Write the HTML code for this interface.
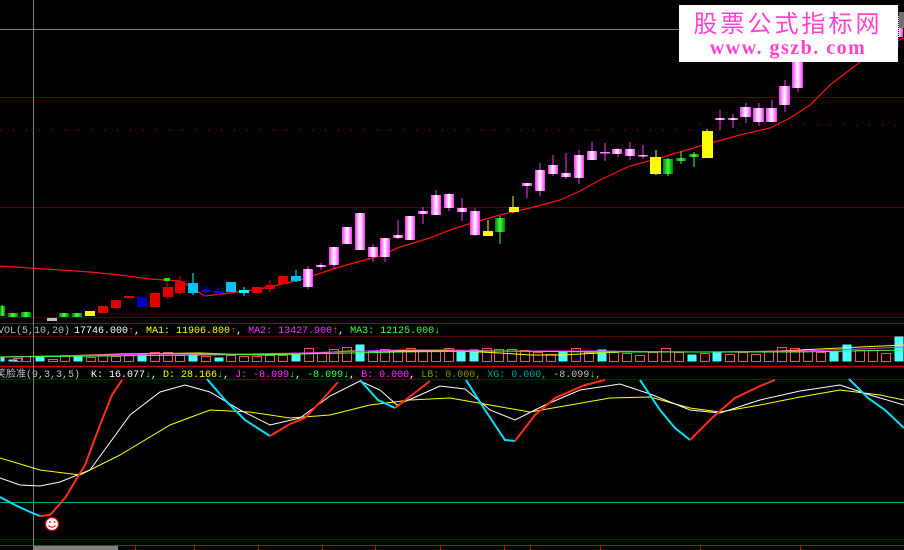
<!DOCTYPE html>
<html><head><meta charset="utf-8"><style>
html,body{margin:0;padding:0;background:#000;width:904px;height:550px;overflow:hidden}
svg{display:block}
.t{font-family:"Liberation Mono","Noto Sans CJK SC",monospace;font-size:10px}
</style></head><body>
<svg width="904" height="550" viewBox="0 0 904 550" xmlns="http://www.w3.org/2000/svg">
<defs>
<linearGradient id="pk" x1="0" x2="1"><stop offset="0" stop-color="#ff30ff"/><stop offset=".5" stop-color="#fff"/><stop offset="1" stop-color="#ff30ff"/></linearGradient>
<linearGradient id="gr" x1="0" x2="1"><stop offset="0" stop-color="#008000"/><stop offset=".5" stop-color="#40ff40"/><stop offset="1" stop-color="#008000"/></linearGradient>
</defs>
<g stroke="#5a0000" stroke-width="1">
<line x1="0" y1="97.5" x2="904" y2="97.5"/>
<line x1="0" y1="207.5" x2="904" y2="207.5"/>
<line x1="0" y1="317.5" x2="904" y2="317.5"/>
<line x1="0" y1="336.5" x2="904" y2="336.5"/>
<line x1="0" y1="379.5" x2="904" y2="379.5"/>
<line x1="0" y1="539.5" x2="904" y2="539.5"/>
</g>
<line x1="0" y1="323.5" x2="904" y2="323.5" stroke="#a00000"/>
<line x1="0" y1="366.5" x2="904" y2="366.5" stroke="#d00000" stroke-width="1.5"/>
<line x1="0" y1="545.5" x2="904" y2="545.5" stroke="#d00000"/>
<line x1="0" y1="29.5" x2="680" y2="29.5" stroke="#808080"/>
<line x1="33.5" y1="0" x2="33.5" y2="550" stroke="#808080"/>
<line x1="0" y1="130" x2="700" y2="130" stroke="#d00000" stroke-dasharray="1 12"/>
<line x1="700" y1="125" x2="904" y2="125" stroke="#d00000" stroke-dasharray="1 12"/>
<polyline fill="none" stroke="#ff1010" stroke-width="1.2" points="0,266 30,268 60,270 90,272 120,275 150,279 180,281 205,296 230,293 260,289 300,280 330,270 350,264 380,256 400,247 430,238 450,230 475,222 500,215 530,208 560,200 580,191 600,180 630,166 660,158 700,146 740,135 770,128 790,118 810,105 830,85 860,62 880,48 904,38"/>
<g id="c">
<g stroke-width="1">
<line x1="2" y1="305" x2="2" y2="316" stroke="#40ff40"/>
<line x1="167" y1="280" x2="167" y2="299" stroke="#ff0000"/>
<line x1="180" y1="276" x2="180" y2="295" stroke="#ff0000"/>
<line x1="193" y1="273" x2="193" y2="295" stroke="#00ffff"/>
<line x1="206" y1="285" x2="206" y2="296" stroke="#0000ff"/>
<line x1="218" y1="287" x2="218" y2="296" stroke="#0000ff"/>
<line x1="244" y1="287" x2="244" y2="296" stroke="#00ffff"/>
<line x1="270" y1="280" x2="270" y2="292" stroke="#ff0000"/>
<line x1="296" y1="270" x2="296" y2="282" stroke="#00ffff"/>
<line x1="308" y1="266" x2="308" y2="289" stroke="#ff30ff"/>
<line x1="321" y1="263" x2="321" y2="270" stroke="#ff30ff"/>
<line x1="334" y1="265" x2="334" y2="269" stroke="#ff30ff"/>
<line x1="373" y1="244" x2="373" y2="262" stroke="#ff30ff"/>
<line x1="385" y1="247" x2="385" y2="262" stroke="#ff30ff"/>
<line x1="398" y1="220" x2="398" y2="239" stroke="#ff30ff"/>
<line x1="423" y1="207" x2="423" y2="224" stroke="#ff30ff"/>
<line x1="436" y1="190" x2="436" y2="215" stroke="#ff30ff"/>
<line x1="449" y1="193" x2="449" y2="211" stroke="#ff30ff"/>
<line x1="462" y1="198" x2="462" y2="221" stroke="#ff30ff"/>
<line x1="475" y1="208" x2="475" y2="236" stroke="#ff30ff"/>
<line x1="488" y1="220" x2="488" y2="236" stroke="#ffff00"/>
<line x1="500" y1="216" x2="500" y2="244" stroke="#40ff40"/>
<line x1="513" y1="196" x2="513" y2="213" stroke="#ffff00"/>
<line x1="527" y1="183" x2="527" y2="198" stroke="#ff30ff"/>
<line x1="540" y1="163" x2="540" y2="196" stroke="#ff30ff"/>
<line x1="553" y1="155" x2="553" y2="176" stroke="#ff30ff"/>
<line x1="566" y1="153" x2="566" y2="179" stroke="#ff30ff"/>
<line x1="579" y1="150" x2="579" y2="184" stroke="#ff30ff"/>
<line x1="592" y1="142" x2="592" y2="160" stroke="#ff30ff"/>
<line x1="605" y1="143" x2="605" y2="161" stroke="#ff30ff"/>
<line x1="618" y1="148" x2="618" y2="157" stroke="#ff30ff"/>
<line x1="630" y1="142" x2="630" y2="160" stroke="#ff30ff"/>
<line x1="643" y1="145" x2="643" y2="159" stroke="#ff30ff"/>
<line x1="656" y1="150" x2="656" y2="175" stroke="#ffff00"/>
<line x1="668" y1="158" x2="668" y2="176" stroke="#40ff40"/>
<line x1="681" y1="151" x2="681" y2="164" stroke="#40ff40"/>
<line x1="694" y1="152" x2="694" y2="167" stroke="#40ff40"/>
<line x1="707" y1="129" x2="707" y2="158" stroke="#ffff00"/>
<line x1="720" y1="110" x2="720" y2="130" stroke="#ff30ff"/>
<line x1="733" y1="114" x2="733" y2="128" stroke="#ff30ff"/>
<line x1="746" y1="103" x2="746" y2="123" stroke="#ff30ff"/>
<line x1="759" y1="103" x2="759" y2="126" stroke="#ff30ff"/>
<line x1="772" y1="100" x2="772" y2="122" stroke="#ff30ff"/>
<line x1="785" y1="80" x2="785" y2="112" stroke="#ff30ff"/>
<line x1="798" y1="58" x2="798" y2="92" stroke="#ff30ff"/>
<line x1="898" y1="10" x2="898" y2="48" stroke="#ff30ff"/>
</g>
<rect x="0" y="306" width="5" height="10" fill="url(#gr)"/>
<rect x="8" y="313" width="10" height="4" fill="url(#gr)"/>
<rect x="21" y="312" width="10" height="5" fill="url(#gr)"/>
<rect x="47" y="318" width="10" height="3" fill="#c0c0c0"/>
<rect x="59" y="313" width="10" height="4" fill="url(#gr)"/>
<rect x="72" y="313" width="10" height="4" fill="url(#gr)"/>
<rect x="85" y="311" width="10" height="5" fill="#ffff00"/>
<rect x="98" y="306" width="10" height="7" fill="#e00000"/>
<rect x="111" y="300" width="10" height="8" fill="#e00000"/>
<rect x="124" y="296" width="10" height="2" fill="#e00000"/>
<rect x="137" y="297" width="10" height="10" fill="#0000c0"/>
<rect x="150" y="293" width="10" height="14" fill="#e00000"/>
<rect x="163" y="287" width="10" height="10" fill="#e00000"/>
<rect x="164" y="278" width="6" height="3" fill="#00ff00"/>
<rect x="175" y="281" width="10" height="12" fill="#e00000"/>
<rect x="188" y="283" width="10" height="10" fill="#00c0ff"/>
<rect x="201" y="290" width="10" height="2" fill="#0000ff"/>
<rect x="214" y="291" width="10" height="2" fill="#0000ff"/>
<rect x="226" y="282" width="10" height="10" fill="#00c0ff"/>
<rect x="239" y="290" width="10" height="3" fill="#00ffff"/>
<rect x="252" y="287" width="10" height="6" fill="#e00000"/>
<rect x="265" y="285" width="10" height="4" fill="#e00000"/>
<rect x="278" y="276" width="10" height="8" fill="#e00000"/>
<rect x="291" y="276" width="10" height="5" fill="#00c0ff"/>
<rect x="303" y="269" width="10" height="18" fill="url(#pk)"/>
<rect x="316" y="265" width="10" height="2" fill="url(#pk)"/>
<rect x="329" y="247" width="10" height="18" fill="url(#pk)"/>
<rect x="342" y="227" width="10" height="17" fill="url(#pk)"/>
<rect x="355" y="213" width="10" height="37" fill="url(#pk)"/>
<rect x="368" y="247" width="10" height="10" fill="url(#pk)"/>
<rect x="380" y="238" width="10" height="19" fill="url(#pk)"/>
<rect x="393" y="235" width="10" height="3" fill="url(#pk)"/>
<rect x="405" y="216" width="10" height="24" fill="url(#pk)"/>
<rect x="418" y="211" width="10" height="3" fill="url(#pk)"/>
<rect x="431" y="195" width="10" height="20" fill="url(#pk)"/>
<rect x="444" y="194" width="10" height="14" fill="url(#pk)"/>
<rect x="457" y="208" width="10" height="4" fill="url(#pk)"/>
<rect x="470" y="211" width="10" height="24" fill="url(#pk)"/>
<rect x="483" y="231" width="10" height="5" fill="#ffff00"/>
<rect x="495" y="218" width="10" height="14" fill="url(#gr)"/>
<rect x="509" y="207" width="10" height="5" fill="#ffff00"/>
<rect x="522" y="183" width="10" height="3" fill="url(#pk)"/>
<rect x="535" y="170" width="10" height="21" fill="url(#pk)"/>
<rect x="548" y="165" width="10" height="9" fill="url(#pk)"/>
<rect x="561" y="173" width="10" height="4" fill="url(#pk)"/>
<rect x="574" y="155" width="10" height="23" fill="url(#pk)"/>
<rect x="587" y="151" width="10" height="9" fill="url(#pk)"/>
<rect x="600" y="152" width="10" height="1.5" fill="#ff80ff"/>
<rect x="612" y="149" width="10" height="5" fill="url(#pk)"/>
<rect x="625" y="149" width="10" height="7" fill="url(#pk)"/>
<rect x="638" y="155" width="10" height="1.5" fill="url(#pk)"/>
<rect x="650" y="157" width="11" height="17" fill="#ffff00"/>
<rect x="663" y="159" width="10" height="15" fill="url(#gr)"/>
<rect x="676" y="158" width="10" height="3" fill="url(#gr)"/>
<rect x="689" y="154" width="10" height="3" fill="url(#gr)"/>
<rect x="702" y="131" width="11" height="27" fill="#ffff00"/>
<rect x="715" y="118" width="10" height="2" fill="url(#pk)"/>
<rect x="728" y="118" width="10" height="2" fill="url(#pk)"/>
<rect x="740" y="107" width="11" height="10" fill="url(#pk)"/>
<rect x="753" y="108" width="11" height="14" fill="url(#pk)"/>
<rect x="766" y="108" width="11" height="14" fill="url(#pk)"/>
<rect x="779" y="86" width="11" height="19" fill="url(#pk)"/>
<rect x="792" y="60" width="11" height="28" fill="url(#pk)"/>
<rect x="893" y="15" width="10" height="22" fill="url(#pk)"/>
</g>
<rect x="679" y="5" width="219" height="57" fill="#fff"/>
<line x1="898.5" y1="5" x2="898.5" y2="62" stroke="#000" stroke-dasharray="1 1"/>
<rect x="899" y="12" width="5" height="16" fill="#707070"/>
<text x="788" y="32" text-anchor="middle" font-family="'Noto Sans CJK SC',sans-serif" font-size="24" fill="#ff40d0" letter-spacing="3">股票公式指标网</text>
<text x="788" y="54" text-anchor="middle" font-family="'Liberation Serif',serif" font-size="20" font-weight="bold" fill="#ff40d0" letter-spacing="1.5">www. gszb. com</text>
<text class="t" y="333"><tspan x="-2" fill="#c0c0c0">VOL(5,10,20)</tspan><tspan x="74" fill="#fff">17746.000</tspan><tspan fill="#ff4040">↑</tspan><tspan fill="#fff">, </tspan><tspan fill="#ffff00">MA1: 11906.800</tspan><tspan fill="#ff4040">↑</tspan><tspan fill="#fff">, </tspan><tspan fill="#ff30ff">MA2: 13427.900</tspan><tspan fill="#ff4040">↑</tspan><tspan fill="#fff">, </tspan><tspan fill="#40ff40">MA3: 12125.000↓</tspan></text>
<g id="vol" stroke-width="1"></g>
<polyline fill="none" stroke="#ffff00" points="0,357 60,356 120,354 200,353 260,355 300,354 350,351 400,351 450,351 480,352 500,353 530,355 560,355 620,352 680,352 730,352 780,351 820,349 860,347 904,345"/>
<polyline fill="none" stroke="#ff30ff" points="0,357 100,355 160,354 250,354 300,353 400,350 450,350 500,351 600,351 700,352 800,351 860,349 904,347"/>
<polyline fill="none" stroke="#40ff40" points="0,357 100,356 200,355 300,354 400,352 500,351 600,352 700,352 800,352 904,350"/>
<text class="t" y="377"><tspan x="-4" fill="#c0c0c0">笑脸准(9,3,3,5)</tspan><tspan x="91" fill="#fff">K: 16.077</tspan><tspan fill="#40ff40">↓</tspan><tspan fill="#fff">, </tspan><tspan fill="#ffff00">D: 28.166</tspan><tspan fill="#40ff40">↓</tspan><tspan fill="#fff">, </tspan><tspan fill="#ff30ff">J: -8.099</tspan><tspan fill="#40ff40">↓</tspan><tspan fill="#fff">, </tspan><tspan fill="#40ff40">-8.099↓</tspan><tspan fill="#fff">, </tspan><tspan fill="#ff30ff">B: 0.000</tspan><tspan fill="#fff">, </tspan><tspan fill="#909000">LB: 0.000</tspan><tspan fill="#909000">, </tspan><tspan fill="#00a0a0">XG: 0.000</tspan><tspan fill="#00a0a0">, </tspan><tspan fill="#c0c0c0">-8.099</tspan><tspan fill="#40ff40">↓</tspan><tspan fill="#c0c0c0">,</tspan></text>
<line x1="0" y1="502.5" x2="904" y2="502.5" stroke="#00a0a0"/>
<polyline fill="none" stroke="#ffff00" points="0,458 40,470 80,475 120,455 170,425 210,410 250,412 290,418 330,415 370,405 410,400 450,398 490,405 530,412 570,405 610,398 650,397 690,408 720,412 760,405 800,397 840,390 880,395 904,400"/>
<polyline fill="none" stroke="#fff" points="0,478 20,485 40,486 60,482 90,470 130,415 160,392 185,385 210,392 240,410 270,425 300,418 330,396 360,381 380,390 397,405 420,395 440,386 465,389 490,410 515,420 545,405 580,390 620,384 650,394 690,410 720,413 760,400 800,391 840,385 870,395 904,405"/>
<g fill="none" stroke-width="2">
<polyline stroke="#00e0ff" points="0,497 15,505 30,512 40,516"/>
<polyline stroke="#ff3010" points="40,516 50,515 65,498 85,465 100,425 112,395 122,380"/>
<polyline stroke="#00e0ff" points="207,379 225,400 245,420 270,436"/>
<polyline stroke="#ff3010" points="270,436 290,424 305,418 322,400 338,382"/>
<polyline stroke="#00e0ff" points="360,380 378,400 395,408"/>
<polyline stroke="#ff3010" points="395,408 412,395 430,381"/>
<polyline stroke="#00e0ff" points="466,380 485,410 505,440 515,441"/>
<polyline stroke="#ff3010" points="515,441 535,415 555,398 585,385 605,380"/>
<polyline stroke="#00e0ff" points="640,380 660,410 675,428 690,440"/>
<polyline stroke="#ff3010" points="690,440 712,418 735,398 760,386 775,380"/>
<polyline stroke="#00e0ff" points="849,379 868,398 885,410 904,428"/>
</g>
<circle cx="52" cy="524" r="6.5" fill="#fff" stroke="#e00000" stroke-width="1.2"/>
<circle cx="50" cy="522" r="0.9" fill="#e00000"/><circle cx="54.5" cy="522" r="0.9" fill="#e00000"/>
<path d="M48.5 525.5 Q52 529 55.5 525.5" fill="none" stroke="#e00000" stroke-width="1"/>
<rect x="33" y="546" width="85" height="4" fill="#808080"/>
<g stroke="#d00000"><line x1="135.5" y1="546" x2="135.5" y2="550"/><line x1="194.5" y1="546" x2="194.5" y2="550"/><line x1="258.5" y1="546" x2="258.5" y2="550"/><line x1="322.5" y1="546" x2="322.5" y2="550"/><line x1="375.5" y1="546" x2="375.5" y2="550"/><line x1="440.5" y1="546" x2="440.5" y2="550"/><line x1="504.5" y1="546" x2="504.5" y2="550"/><line x1="530.5" y1="546" x2="530.5" y2="550"/><line x1="600.5" y1="546" x2="600.5" y2="550"/><line x1="700.5" y1="546" x2="700.5" y2="550"/><line x1="800.5" y1="546" x2="800.5" y2="550"/></g>
</svg>
<script>
(function(){
var g=document.getElementById('vol');
var d=[[0,4,'c'],[8,2,'c'],[13,3,'r'],[21,5,'r'],[35,5,'c'],[48,2,'r'],[60,6,'r'],[73,5,'c'],[86,4,'r'],[98,6,'r'],[111,5,'r'],[124,6,'r'],[137,8,'c'],[150,9,'r'],[163,9,'r'],[175,6,'r'],[188,6,'c'],[201,5,'r'],[214,4,'c'],[226,6,'r'],[239,5,'r'],[252,5,'r'],[265,6,'r'],[278,6,'r'],[291,8,'c'],[304,13,'r'],[317,9,'r'],[329,12,'r'],[342,14,'r'],[355,17,'c'],[368,10,'r'],[380,12,'r'],[393,11,'r'],[406,13,'r'],[418,10,'r'],[431,10,'r'],[444,13,'r'],[456,11,'c'],[469,12,'c'],[482,13,'r'],[494,12,'r'],[507,12,'r'],[520,11,'r'],[533,9,'r'],[546,7,'r'],[558,10,'c'],[571,13,'r'],[584,9,'r'],[597,12,'c'],[609,9,'r'],[622,8,'r'],[635,6,'r'],[648,9,'r'],[661,13,'r'],[674,9,'r'],[687,7,'c'],[700,8,'r'],[712,9,'c'],[725,7,'r'],[738,9,'r'],[751,7,'r'],[764,10,'r'],[777,14,'r'],[790,13,'r'],[803,12,'r'],[816,9,'r'],[829,10,'c'],[842,17,'c'],[855,11,'r'],[868,11,'r'],[881,8,'r'],[894,25,'c']];
var ns='http://www.w3.org/2000/svg';
d.forEach(function(a){var r=document.createElementNS(ns,'rect');r.setAttribute('x',a[0]+0.5);r.setAttribute('y',361.5-a[1]);r.setAttribute('width',a[0]==0?4:9);r.setAttribute('height',a[1]);
if(a[2]=='c'){r.setAttribute('fill','#50ffff');}else{r.setAttribute('fill','none');r.setAttribute('stroke','#ff5050');}
g.appendChild(r);});
})();
</script>
</body></html>
